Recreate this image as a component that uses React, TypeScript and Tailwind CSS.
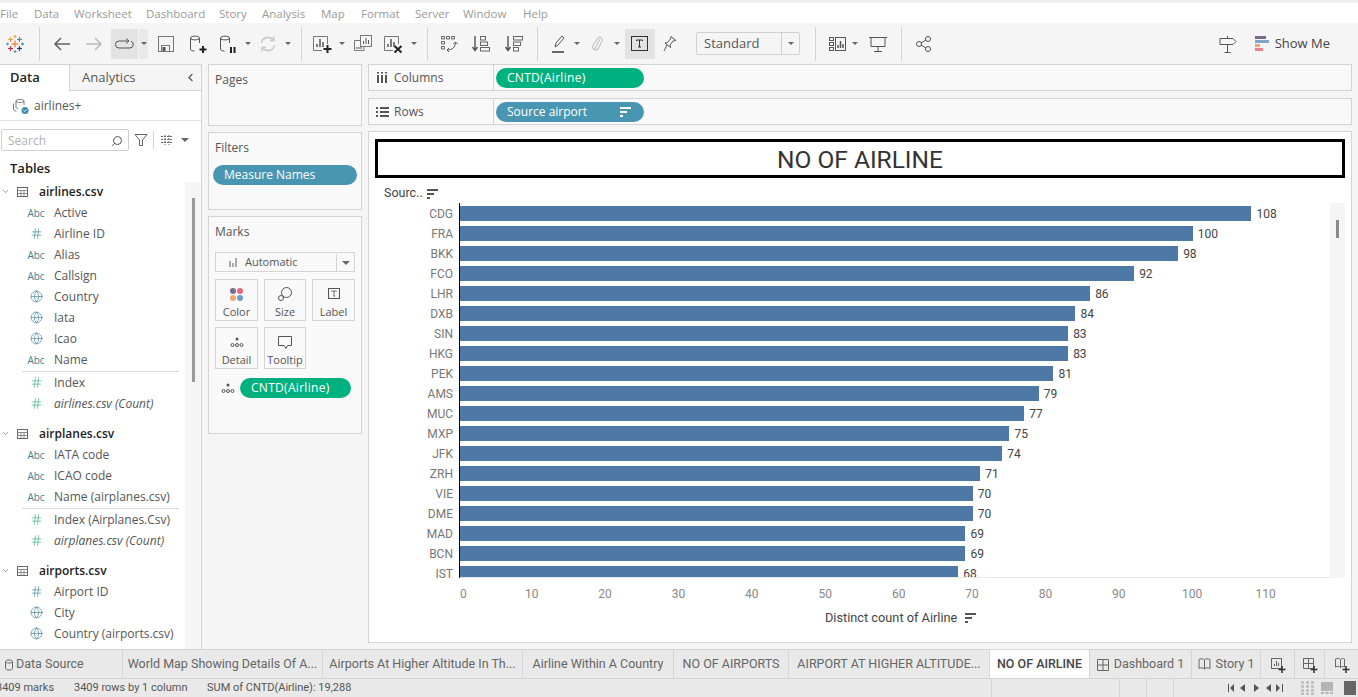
import React from "react";
import { ChevronDown, ChevronLeft, Globe, Hash, Search } from "lucide-react";

const menus = [
  { label: "File", cls: "w-[34px]" },
  { label: "Data", cls: "w-[40px]" },
  { label: "Worksheet", cls: "w-[72px]" },
  { label: "Dashboard", cls: "w-[73px]" },
  { label: "Story", cls: "w-[43px]" },
  { label: "Analysis", cls: "w-[59px]" },
  { label: "Map", cls: "w-[40px]" },
  { label: "Format", cls: "w-[54px]" },
  { label: "Server", cls: "w-[48px]" },
  { label: "Window", cls: "w-[60px]" },
  { label: "Help", cls: "w-[40px]" },
];

type Field = { name: string; kind: "abc" | "hash" | "globe" | "measure"; italic?: boolean; line?: boolean };

const tables: { name: string; cls: string; fields: Field[] }[] = [
  {
    name: "airlines.csv",
    cls: "",
    fields: [
      { name: "Active", kind: "abc" },
      { name: "Airline ID", kind: "hash" },
      { name: "Alias", kind: "abc" },
      { name: "Callsign", kind: "abc" },
      { name: "Country", kind: "globe" },
      { name: "Iata", kind: "globe" },
      { name: "Icao", kind: "globe" },
      { name: "Name", kind: "abc" },
      { name: "Index", kind: "measure", line: true },
      { name: "airlines.csv (Count)", kind: "measure", italic: true },
    ],
  },
  {
    name: "airplanes.csv",
    cls: "mt-[9px]",
    fields: [
      { name: "IATA code", kind: "abc" },
      { name: "ICAO code", kind: "abc" },
      { name: "Name (airplanes.csv)", kind: "abc" },
      { name: "Index (Airplanes.Csv)", kind: "measure", line: true },
      { name: "airplanes.csv (Count)", kind: "measure", italic: true },
    ],
  },
  {
    name: "airports.csv",
    cls: "mt-[9px]",
    fields: [
      { name: "Airport ID", kind: "hash" },
      { name: "City", kind: "globe" },
      { name: "Country (airports.csv)", kind: "globe" },
    ],
  },
];

const bars = [
  ["CDG", 108],
  ["FRA", 100],
  ["BKK", 98],
  ["FCO", 92],
  ["LHR", 86],
  ["DXB", 84],
  ["SIN", 83],
  ["HKG", 83],
  ["PEK", 81],
  ["AMS", 79],
  ["MUC", 77],
  ["MXP", 75],
  ["JFK", 74],
  ["ZRH", 71],
  ["VIE", 70],
  ["DME", 70],
  ["MAD", 69],
  ["BCN", 69],
  ["IST", 68],
] as const;

const ticks = [10, 20, 30, 40, 50, 60, 70, 80, 90, 100, 110];

const tabs = [
  { label: "World Map Showing Details Of A...", cls: "w-[200px]" },
  { label: "Airports At Higher Altitude In Th...", cls: "w-[200px]" },
  { label: "Airline Within A Country", cls: "w-[151px]" },
  { label: "NO OF AIRPORTS", cls: "w-[115px]" },
  { label: "AIRPORT AT HIGHER ALTITUDE...", cls: "w-[201px]" },
];

function Svg({ w = 22, h = 22, children }: { w?: number; h?: number; children: React.ReactNode }) {
  return (
    <svg width={w} height={h} viewBox={`0 0 ${w} ${h}`} fill="none" stroke="#555" strokeWidth="1">
      {children}
    </svg>
  );
}

function Caret() {
  return <div className="w-0 h-0 border-l-[3px] border-r-[3px] border-t-[3px] border-l-transparent border-r-transparent border-t-[#666]" />;
}

function Sep({ cls }: { cls: string }) {
  return <div className={`w-px h-[34px] bg-[#d4d4d4] shrink-0 ${cls}`} />;
}

function Slot({ cls, children }: { cls: string; children?: React.ReactNode }) {
  return <div className={`h-[30px] flex items-center justify-center shrink-0 ${cls}`}>{children}</div>;
}

function SortBars({ color = "#555" }: { color?: string }) {
  return (
    <svg width="12" height="10" viewBox="0 0 12 10">
      <rect x="0" y="0" width="11" height="2" fill={color} />
      <rect x="0" y="4" width="7" height="2" fill={color} />
      <rect x="0" y="8" width="3" height="2" fill={color} />
    </svg>
  );
}

function Logo() {
  const plus = (x: number, y: number, r: number, c: string) => (
    <g stroke={c} strokeWidth="1.2" key={`${x}-${y}`}>
      <line x1={x - r} y1={y} x2={x + r} y2={y} />
      <line x1={x} y1={y - r} x2={x} y2={y + r} />
    </g>
  );
  return (
    <svg width="18" height="18" viewBox="0 0 18 18">
      {plus(4.5, 4.5, 2.5, "#e8a05c")}
      {plus(13.5, 4.5, 2.5, "#4f8a9e")}
      {plus(4.5, 13.5, 2.5, "#b5324c")}
      {plus(13.5, 13.5, 2.5, "#1f447e")}
      {plus(9, 9, 3.5, "#e8842c")}
      {plus(9, 1.5, 1.5, "#e8a05c")}
      {plus(9, 16.5, 1.5, "#7d8fa6")}
      {plus(1.5, 9, 1.5, "#6f9db0")}
      {plus(16.5, 9, 1.5, "#4f8a9e")}
    </svg>
  );
}

function Cylinder({ children }: { children?: React.ReactNode }) {
  return (
    <Svg w={20} h={22}>
      <path d="M2.500 5c0-2.500 9-2.500 9 0v5M2.500 5c0 2.500 9 2.500 9 0M2.500 5v11c0 1.500 2 2 4 2" />
      {children}
    </Svg>
  );
}

function SheetIcon({ children }: { children?: React.ReactNode }) {
  return (
    <Svg w={20} h={22}>
      <path d="M10 17.500H1.500v-14h14V11" stroke="#777" />
      <path d="M5 14v-3M8 14V6M11 14v-5" strokeWidth="1.500" />
      {children}
    </Svg>
  );
}

function Toolbar() {
  return (
    <div className="h-[41px] bg-[#f5f5f5] flex items-center shrink-0">
      <Slot cls="w-[30px]"><Logo /></Slot>
      <Sep cls="ml-[9px]" />
      <Slot cls="w-[32px] ml-[6px]">
        <svg width="18" height="14" viewBox="0 0 18 14" fill="none" stroke="#666" strokeWidth="1.600"><path d="M17 7H2M8 1L2 7l6 6" /></svg>
      </Slot>
      <Slot cls="w-[32px]">
        <svg width="18" height="14" viewBox="0 0 18 14" fill="none" stroke="#bbb" strokeWidth="1.600"><path d="M1 7h15M10 1l6 6-6 6" /></svg>
      </Slot>
      <Slot cls="w-[27px] ml-px bg-[#e3e3e3]">
        <svg width="20" height="12" viewBox="0 0 20 12" fill="none" stroke="#555"><path d="M14 3H4a3.500 3.500 0 000 7h11a3.500 3.500 0 001-6.800" /><path d="M11 .5L14 3l-3 2.500" /></svg>
      </Slot>
      <Slot cls="w-[9px] ml-px bg-[#e9e9e9]"><Caret /></Slot>
      <Slot cls="w-[32px] ml-[2px]">
        <Svg w={18} h={18}><rect x="1.500" y="1.500" width="15" height="15" stroke="#777" /><rect x="4.500" y="10.500" width="8" height="6" stroke="#777" /><rect x="5.500" y="12" width="3" height="4" fill="#555" stroke="none" /></Svg>
      </Slot>
      <Slot cls="w-[32px]"><Cylinder><path d="M15 13v7M11.500 16.500h7" stroke="#222" strokeWidth="2" /></Cylinder></Slot>
      <Slot cls="w-[28px]"><Cylinder><path d="M13 14v6M16.500 14v6" stroke="#222" strokeWidth="2" /></Cylinder></Slot>
      <Slot cls="w-[12px]"><Caret /></Slot>
      <Slot cls="w-[28px]">
        <svg width="18" height="18" viewBox="0 0 18 18" fill="none" stroke="#c4c4c4" strokeWidth="1.300"><path d="M2.500 8a6.500 6.500 0 0112-2.500M15.500 10a6.500 6.500 0 01-12 2.500" /><path d="M15 1.500v4h-4M3 16.500v-4h4" /></svg>
      </Slot>
      <Slot cls="w-[12px]"><Caret /></Slot>
      <Sep cls="ml-[7px]" />
      <Slot cls="w-[28px] ml-[6px]"><SheetIcon><path d="M15.500 12v8M11.500 16h8" stroke="#222" strokeWidth="2" /></SheetIcon></Slot>
      <Slot cls="w-[12px]"><Caret /></Slot>
      <Slot cls="w-[30px]">
        <Svg w={20} h={20}><rect x="7.500" y="1.500" width="11" height="11" fill="#f5f5f5" stroke="#777" /><path d="M10.500 10V7M13 10V4M15.500 10V6" /><path d="M7 6.500H1.500v10H11V13" stroke="#777" /><path d="M4 15v-2M6 15v-2M8 15v-2" /></Svg>
      </Slot>
      <Slot cls="w-[30px]"><SheetIcon><path d="M11.500 13l7 6.500M18.500 13l-7 6.500" stroke="#222" strokeWidth="2" /></SheetIcon></Slot>
      <Slot cls="w-[12px]"><Caret /></Slot>
      <Sep cls="ml-[7px]" />
      <Slot cls="w-[30px] ml-[6px]">
        <Svg w={20} h={20}><path d="M2.500 2.500h3v2.500h-3zM7.500 2.500h3v2.500h-3zM12.500 2.500h3v2.500h-3zM2.500 7.500h3v2.500h-3zM2.500 12.500h3v2.500h-3z" stroke="#666" /><path d="M16.500 8c0 5-3 8-8 8M14.500 10l2-2 2 2M10 14l-2 2 2 2" /></Svg>
      </Slot>
      <Slot cls="w-[34px]">
        <Svg w={20} h={20}><path d="M4 2v14M1.500 13L4 16.500 6.500 13" strokeWidth="1.400" /><rect x="9.500" y="2.500" width="5" height="3.500" stroke="#666" /><rect x="9.500" y="8" width="7" height="3.500" stroke="#666" /><rect x="9.500" y="13.500" width="9" height="3.500" stroke="#666" /></Svg>
      </Slot>
      <Slot cls="w-[32px]">
        <Svg w={20} h={20}><path d="M4 2v14M1.500 13L4 16.500 6.500 13" strokeWidth="1.400" /><rect x="9.500" y="2.500" width="9" height="3.500" stroke="#666" /><rect x="9.500" y="8" width="7" height="3.500" stroke="#666" /><rect x="9.500" y="13.500" width="5" height="3.500" stroke="#666" /></Svg>
      </Slot>
      <Sep cls="ml-[7px]" />
      <Slot cls="w-[30px] ml-[6px]">
        <Svg w={18} h={20}><path d="M5 13l1-4 6-7 2 2-6 7z" /><path d="M2 18h12" stroke="#444" strokeWidth="1.600" /></Svg>
      </Slot>
      <Slot cls="w-[6px]"><Caret /></Slot>
      <Slot cls="w-[34px]">
        <svg width="16" height="20" viewBox="0 0 16 20" fill="none" stroke="#c4c4c4" strokeWidth="1.200"><path d="M11 5l-5 9c-1 2 2 3 3 1l4-8c1-3-2-5-4-3L4 11c-2 4 3 7 5 3" /></svg>
      </Slot>
      <Slot cls="w-[6px]"><Caret /></Slot>
      <Slot cls="w-[30px] ml-[5px] bg-[#e3e3e3]">
        <svg width="18" height="16" viewBox="0 0 18 16" fill="none" stroke="#333"><rect x=".5" y=".5" width="16" height="14" /><path d="M5.500 5V4h6v1M8.500 4v7M7 11h3" /></svg>
      </Slot>
      <Slot cls="w-[30px]">
        <Svg w={16} h={18}><path d="M9 1.500l5 4-3 .500-3 4 .500 2.500L3 8l2.500-.500 3-3.500zM5 10l-3 6" /></Svg>
      </Slot>
      <div className="w-[104px] h-[23px] ml-[11px] border border-[#d0d0d0] rounded-[2px] flex items-center text-[13px] text-[#555] shrink-0">
        <div className="flex-1 pl-[7px]">Standard</div>
        <div className="w-[18px] h-full border-l border-[#d0d0d0] flex items-center justify-center"><Caret /></div>
      </div>
      <Sep cls="ml-[15px]" />
      <Slot cls="w-[30px] ml-[6px]">
        <Svg w={20} h={18}><rect x="2.500" y="2.500" width="4" height="3" /><rect x="2.500" y="7.500" width="4" height="3" /><rect x="2.500" y="12.500" width="4" height="3" /><rect x="8.500" y="2.500" width="10" height="13" /><path d="M11 13v-3M13.500 13V6M16 13V9" strokeWidth="1.500" /></Svg>
      </Slot>
      <Slot cls="w-[6px]"><Caret /></Slot>
      <Slot cls="w-[30px] ml-[5px]">
        <Svg w={20} h={18}><path d="M1 2.500h18M3 2.500v9h14v-9M10 11.500v5M6 16.500h8" /></Svg>
      </Slot>
      <Sep cls="ml-[8px]" />
      <Slot cls="w-[30px] ml-[7px]">
        <Svg w={18} h={18}><circle cx="4" cy="9" r="2.500" /><circle cx="13" cy="4" r="2.500" /><circle cx="13" cy="14" r="2.500" /><path d="M6 8l5-3M6 10l5 3" /></Svg>
      </Slot>
      <div className="flex-1" />
      <Svg w={20} h={20}><path d="M2 4.500h13l3 3-3 3H2zM9.500 10.500v8M6.500 18.500h6M9.500 2v2" /></Svg>
      <div className="ml-[17px] flex items-center">
        <svg width="15" height="16" viewBox="0 0 15 16">
          <rect x="0" y="0" width="11" height="3" fill="#7b6a90" />
          <rect x="0" y="4" width="14" height="3" fill="#84a5c7" />
          <rect x="0" y="8" width="5" height="3" fill="#eda477" />
          <rect x="0" y="12" width="8" height="3" fill="#ec7f8c" />
        </svg>
        <span className="ml-[5px] text-[13px] text-[#444]">Show Me</span>
      </div>
      <div className="w-[28px]" />
    </div>
  );
}

function FieldIcon({ kind }: { kind: Field["kind"] }) {
  if (kind === "abc") return <span className="text-[10px] font-medium text-[#3f7c97] leading-none">Abc</span>;
  if (kind === "globe") return <Globe size={13} color="#3f7f9c" strokeWidth={1.2} />;
  return <Hash size={13} color={kind === "hash" ? "#3f8096" : "#3aa884"} strokeWidth={1.2} />;
}

function DataPane() {
  return (
    <div className="w-[202px] shrink-0 border-r border-t border-[#d4d4d4] bg-white flex flex-col overflow-hidden">
      <div className="h-[26px] flex shrink-0 text-[13px]">
        <div className="w-[70px] pl-[10px] flex items-center font-semibold text-[#222] border-r border-[#d4d4d4]">Data</div>
        <div className="flex-1 bg-[#f5f5f5] border-b border-[#d4d4d4] pl-[12px] flex items-center text-[#555] justify-between pr-[4px]">
          Analytics
          <ChevronLeft size={13} color="#555" />
        </div>
      </div>
      <div className="h-[30px] flex items-center border-b border-[#e2e2e2] pl-[12px] shrink-0">
        <svg width="18" height="18" viewBox="0 0 18 18" fill="none" stroke="#666" strokeWidth=".9">
          <path d="M4 4c0-2 8-2 8 0v4M4 4c0 2 8 2 8 0M4 4v6c0 1 1 1.500 2 1.700" />
          <path d="M1.500 6.500V12c0 1 1 2 3 2" />
          <circle cx="13" cy="13.500" r="3.500" fill="#3f8cb3" stroke="none" />
          <path d="M11.500 13.500l1 1 2-2" stroke="#fff" />
        </svg>
        <span className="ml-[4px] text-[12px] text-[#555]">airlines+</span>
      </div>
      <div className="h-[22px] mt-[8px] flex items-center shrink-0">
        <div className="w-[128px] h-full ml-px border border-[#cfcfcf] rounded-[2px] flex items-center justify-between pl-[6px] pr-[5px] pt-px text-[12px] text-[#b0b0b0]">
          Search
          <Search size={12} color="#555" className="-scale-x-100" />
        </div>
        <svg className="ml-[5px]" width="14" height="14" viewBox="0 0 14 14" fill="none" stroke="#666"><path d="M1 1.500h12L8.500 7v5.500h-3V7z" /></svg>
        <div className="w-px h-[18px] bg-[#d4d4d4] ml-[5px]" />
        <svg className="ml-[7px]" width="12" height="10" viewBox="0 0 12 10" stroke="#666"><path d="M0 1.500h12M0 4.500h12M0 7.500h12M4 0v10M8 0v10" strokeDasharray="2 1" /></svg>
        <div className="ml-[8px] w-0 h-0 border-l-[4px] border-r-[4px] border-t-[4px] border-l-transparent border-r-transparent border-t-[#666]" />
      </div>
      <div className="h-[20px] mt-[8px] -mb-px pl-[10px] flex items-center text-[13px] font-semibold text-[#222] shrink-0">Tables</div>
      <div className="relative flex-1 min-h-0">
        <div className="absolute right-0 top-[4px] bottom-0 w-[16px] bg-[#f5f5f5]">
          <div className="absolute left-[7px] top-[16px] w-[3px] h-[184px] bg-[#9a9a9a]" />
        </div>
        <div className="pt-[3px]">
          {tables.map((t) => (
            <div key={t.name} className={t.cls}>
              <div className="h-[21px] flex items-center">
                <ChevronDown size={9} color="#777" className="ml-px" />
                <svg className="ml-[7px]" width="12" height="10" viewBox="0 0 12 10" fill="none" stroke="#666"><rect x=".5" y=".5" width="10" height="9" /><path d="M.5 3.500h10M.5 6.500h10M4 3.500v6M7 3.500v6" strokeWidth=".7" /></svg>
                <span className="ml-[10px] text-[12px] font-semibold text-[#222]">{t.name}</span>
              </div>
              {t.fields.map((f) => (
                <React.Fragment key={f.name}>
                  {f.line && <div className="ml-[22px] w-[157px] h-px bg-[#dcdcdc] mt-px" />}
                  <div className="h-[21px] flex items-center whitespace-nowrap">
                    <div className="w-[24px] ml-[24px] flex justify-center"><FieldIcon kind={f.kind} /></div>
                    <span className={`ml-[6px] text-[12px] text-[#555] ${f.italic ? "italic" : ""}`}>{f.name}</span>
                  </div>
                </React.Fragment>
              ))}
            </div>
          ))}
        </div>
      </div>
    </div>
  );
}

function Card({ label, children }: { label: string; children: React.ReactNode }) {
  return (
    <div className="h-[42px] border border-[#d4d4d4] flex flex-col items-center justify-between pt-[5px] text-[11px] text-[#555]">
      <div className="h-[18px] flex items-center">{children}</div>
      {label}
    </div>
  );
}

function ShelvesColumn() {
  return (
    <div className="w-[154px] ml-[6px] shrink-0 flex flex-col">
      <div className="h-[62px] border border-[#d4d4d4] bg-[#f9f9f9] pl-[6px] pt-[6px] text-[12px] text-[#555]">Pages</div>
      <div className="h-[78px] mt-[6px] border border-[#d4d4d4] bg-[#f9f9f9] text-[12px] text-[#555]">
        <div className="pl-[6px] pt-[6px] h-[32px]">Filters</div>
        <div className="ml-[4px] w-[144px] h-[20px] rounded-full bg-[#4996b2] text-white flex items-center pl-[11px] whitespace-nowrap">Measure Names</div>
      </div>
      <div className="h-[218px] mt-[6px] border border-[#d4d4d4] bg-[#f9f9f9] text-[12px] text-[#555]">
        <div className="pl-[6px] pt-[6px] h-[35px]">Marks</div>
        <div className="ml-[6px] w-[140px] h-[20px] pt-px border border-[#d4d4d4] flex items-center text-[11px] mb-[7px]">
          <svg className="ml-[12px]" width="10" height="9" viewBox="0 0 10 9"><path d="M1 3h2v6H1zM4 5h2v4H4zM7 0h2v9H7z" fill="#aaa" /></svg>
          <span className="ml-[7px] flex-1">Automatic</span>
          <div className="w-[18px] h-full border-l border-[#d4d4d4] flex items-center justify-center">
            <div className="w-0 h-0 border-l-[4px] border-r-[4px] border-t-[4px] border-l-transparent border-r-transparent border-t-[#666]" />
          </div>
        </div>
        <div className="ml-[6px] w-[140px] grid grid-cols-[43px_42px_43px] gap-x-[6px] gap-y-[6px]">
          <Card label="Color">
            <svg width="15" height="15" viewBox="0 0 15 15">
              <circle cx="4" cy="4" r="3" fill="#7b6a90" />
              <circle cx="11" cy="4" r="3" fill="#e8667a" />
              <circle cx="4" cy="11" r="3" fill="#eda477" />
              <circle cx="11" cy="11" r="3" fill="#6c9ccb" />
            </svg>
          </Card>
          <Card label="Size">
            <Svg w={16} h={16}><circle cx="9.500" cy="6.500" r="5" /><circle cx="4" cy="12" r="2.500" fill="#f9f9f9" /></Svg>
          </Card>
          <Card label="Label">
            <Svg w={14} h={14}><rect x="1.500" y="1.500" width="11" height="10" /><path d="M4.500 4.500v-.5h5v.5M7 4v5M6 9h2" strokeWidth=".8" /></Svg>
          </Card>
          <Card label="Detail">
            <Svg w={14} h={14}><circle cx="7" cy="4" r="1.500" fill="#555" stroke="none" /><circle cx="2.500" cy="10" r="1.500" /><circle cx="7" cy="10" r="1.500" /><circle cx="11.500" cy="10" r="1.500" /></Svg>
          </Card>
          <Card label="Tooltip">
            <Svg w={16} h={15}><path d="M1.500 1.500h13v9h-4l-1.500 3-2-3h-5.500z" /></Svg>
          </Card>
        </div>
        <div className="mt-[9px] flex items-center">
          <div className="ml-[12px] w-[17px]">
            <Svg w={14} h={14}><circle cx="7" cy="4" r="1.500" fill="#555" stroke="none" /><circle cx="2.500" cy="10" r="1.500" /><circle cx="7" cy="10" r="1.500" /><circle cx="11.500" cy="10" r="1.500" /></Svg>
          </div>
          <div className="ml-[2px] w-[111px] h-[20px] rounded-full bg-[#00b180] text-white flex items-center pl-[11px] tracking-[0.3px]">CNTD(Airline)</div>
        </div>
      </div>
    </div>
  );
}

function Shelf({ label, icon, pill, sort, cls }: { label: string; icon: React.ReactNode; pill: string; sort?: boolean; cls: string }) {
  return (
    <div className={`h-[27px] border border-[#d4d4d4] bg-[#f9f9f9] flex items-center text-[12px] text-[#555] shrink-0 ${cls}`}>
      <div className="w-[125px] h-full border-r border-[#d4d4d4] flex items-center pl-[6px]">
        <div className="w-[14px] flex justify-center">{icon}</div>
        <span className="ml-[5px]">{label}</span>
      </div>
      <div className={`ml-[2px] w-[148px] h-[20px] rounded-full text-white flex items-center justify-between pl-[11px] pr-[12px] ${sort ? "bg-[#4996b2]" : "bg-[#00b180] tracking-[0.3px]"}`}>
        {pill}
        {sort && <SortBars color="#fff" />}
      </div>
    </div>
  );
}

function Chart() {
  return (
    <div className="h-[512px] mt-[6px] border border-[#d4d4d4] bg-white px-[6px] pt-[7px] flex flex-col shrink-0 overflow-hidden font-['Roboto',sans-serif]">
      <div className="h-[39px] pt-[3px] border-[3px] border-black flex items-center justify-center text-[24.5px] text-[#333] shrink-0">NO OF AIRLINE</div>
      <div className="h-[25px] pl-[9px] pt-[6px] flex items-center text-[12.5px] text-[#444] shrink-0">
        Sourc..
        <span className="ml-[4px]"><SortBars /></span>
      </div>
      <div className="flex h-[375px] shrink-0">
        <div className="relative w-[955px] overflow-hidden">
          {bars.map(([code, value]) => (
            <div key={code} className="h-[20px] flex items-center">
              <div className="w-[84px] pr-[6px] pt-px text-right text-[12px] leading-none text-[#777]">{code}</div>
              <div className="h-[20px] w-px bg-black" />
              <div className="h-[15px] mt-px bg-[#4e79a7]" style={{ width: value * 7.333 - 0.5 }} />
              <span className="ml-[5px] pt-px text-[12px] leading-none text-[#444]">{value}</span>
            </div>
          ))}
          <div className="absolute left-[85px] right-0 bottom-0 h-px bg-[#e8e8e8]" />
        </div>
        <div className="w-[15px] bg-[#f5f5f5] relative">
          <div className="absolute left-[6px] top-[17px] w-[3px] h-[18px] bg-[#8a8a8a]" />
        </div>
      </div>
      <div className="flex h-[31px] items-center text-[12px] text-[#888] shrink-0">
        <div className="w-[120px] pl-[85px]">0</div>
        {ticks.map((t) => (
          <div key={t} className="w-[73.4px] text-center">{t}</div>
        ))}
      </div>
      <div className="pl-[450px] flex items-center text-[12.75px] text-[#444] h-[17px]">
        Distinct count of Airline
        <span className="ml-[8px]"><SortBars /></span>
      </div>
    </div>
  );
}

function Tab({ cls, children, active }: { cls: string; children: React.ReactNode; active?: boolean }) {
  return (
    <div className={`h-full pt-px flex items-center border-r border-[#d4d4d4] whitespace-nowrap shrink-0 ${active ? "bg-white font-medium text-[#444]" : "text-[#666]"} ${cls}`}>
      {children}
    </div>
  );
}

export default function App() {
  return (
    <div className="w-[1358px] h-[697px] flex flex-col overflow-hidden bg-[#f5f5f5] font-['Open_Sans',sans-serif]">
      <div className="h-[3px] bg-[#f0f0f0] shrink-0" />
      <div className="h-[20px] pt-px bg-white flex items-center text-[11.5px] text-[#9a9a9a] shrink-0">
        {menus.map((m) => (
          <div key={m.label} className={m.cls}>{m.label}</div>
        ))}
      </div>
      <Toolbar />
      <div className="h-[585px] flex shrink-0">
        <DataPane />
        <ShelvesColumn />
        <div className="w-[984px] ml-[6px] shrink-0 flex flex-col">
          <Shelf
            label="Columns"
            pill="CNTD(Airline)"
            cls=""
            icon={<svg width="11" height="11" viewBox="0 0 11 11"><path d="M0 3h2v8H0zM4 3h2v8H4zM8 3h2v8H8zM0 0h2v1.500H0zM4 0h2v1.500H4zM8 0h2v1.500H8z" fill="#555" /></svg>}
          />
          <Shelf
            label="Rows"
            pill="Source airport"
            sort
            cls="mt-[7px]"
            icon={<svg width="13" height="10" viewBox="0 0 13 10"><path d="M0 0h2v2H0zM4 0h9v2H4zM0 4h2v2H0zM4 4h9v2H4zM0 8h2v2H0zM4 8h9v2H4z" fill="#555" /></svg>}
          />
          <Chart />
        </div>
      </div>
      <div className="h-[30px] border-t border-b border-[#d4d4d4] bg-[#e9e9e9] flex items-center text-[12.5px] shrink-0 font-['Roboto',sans-serif]">
        <Tab cls="w-[123px] pl-[5px]">
          <svg width="8" height="12" viewBox="0 0 8 12" fill="none" stroke="#666"><path d="M.5 2.500c0-2 7-2 7 0v7c0 2-7 2-7 0zM.5 2.500c0 2 7 2 7 0" /></svg>
          <span className="ml-[3px]">Data Source</span>
        </Tab>
        {tabs.map((t) => (
          <Tab key={t.label} cls={`justify-center ${t.cls}`}>{t.label}</Tab>
        ))}
        <Tab cls="w-[100px] justify-center" active>NO OF AIRLINE</Tab>
        <Tab cls="w-[102px] justify-center">
          <svg width="12" height="12" viewBox="0 0 12 12" fill="none" stroke="#666"><path d="M.5.500h11v11H.5zM6 .5v11M.5 6h11" /></svg>
          <span className="ml-[5px]">Dashboard 1</span>
        </Tab>
        <Tab cls="w-[69px] justify-center">
          <svg width="13" height="13" viewBox="0 0 13 13" fill="none" stroke="#666"><path d="M1 1.500c2-1 4-1 5.500.5 1.500-1.500 3.500-1.500 5.500-.5v9c-2-1-4-1-5.500.5C5 9.500 3 9.500 1 10.500zM6.500 2v9" /></svg>
          <span className="ml-[5px]">Story 1</span>
        </Tab>
        <Tab cls="w-[34px] justify-center">
          <svg width="16" height="16" viewBox="0 0 16 16" fill="none" stroke="#666"><rect x="1.500" y="1.500" width="10" height="10" /><path d="M4.500 9V7M6.500 9V4M8.500 9V6" /><path d="M12 9v7M8.500 12.500h7" stroke="#333" strokeWidth="1.500" /></svg>
        </Tab>
        <Tab cls="w-[30px] justify-center">
          <svg width="16" height="16" viewBox="0 0 16 16" fill="none" stroke="#666"><path d="M1.500 1.500h10v10h-10zM6.500 1.500v10M1.500 6.500h10" /><path d="M12 9v7M8.500 12.500h7" stroke="#333" strokeWidth="1.500" /></svg>
        </Tab>
        <Tab cls="w-[33px] border-r-0 justify-center">
          <svg width="16" height="16" viewBox="0 0 16 16" fill="none" stroke="#666"><path d="M1.500 2c2-1 3.500-1 5 .5 1-1 2.500-1.500 4-.5v8c-1.500-1-3-.5-4 .5-1.500-1.500-3-1.500-5-.5zM6.500 2.500v8" /><path d="M12 9v7M8.500 12.500h7" stroke="#333" strokeWidth="1.500" /></svg>
        </Tab>
      </div>
      <div className="flex-1 bg-[#e9e9e9] flex items-center text-[11px] text-[#555] whitespace-nowrap min-h-0 font-['Roboto',sans-serif]">
        <span className="-ml-[4px] w-[78px] shrink-0">3409 marks</span>
        <span className="w-[133px] shrink-0">3409 rows by 1 column</span>
        <span className="w-[784px] shrink-0">SUM of CNTD(Airline): 19,288</span>
        <div className="w-[128px] h-full border-l border-[#d4d4d4] shrink-0" />
        <div className="w-[27px] h-full border-l border-[#d4d4d4] shrink-0" />
        <div className="w-[27px] h-full border-l border-[#d4d4d4] shrink-0" />
        <div className="h-full border-l border-[#d4d4d4] flex items-center pl-[54px]">
          <svg width="60" height="8" viewBox="0 0 60 8" fill="#555"><path d="M1 0h1v8H1zM7 0v8L3 4zM18 0v8l-5-4zM27 0l5 4-5 4zM44 0l-5 4 5 4zM49 0l4 4-4 4zM55 0h1v8h-1z" transform="translate(-1 0)" /></svg>
        </div>
        <svg className="ml-[12px]" width="58" height="14" viewBox="0 0 58 14">
          <path d="M1 1.500h13M1 5.500h13M1 9.500h13M1 13h13" stroke="#bdbdbd" strokeWidth="2.500" strokeDasharray="3 2" />
          <path d="M21 1h12v9H21z" fill="#b5b5b5" />
          <path d="M21 12h12" stroke="#b5b5b5" strokeWidth="2" strokeDasharray="3 1.500" />
          <path d="M44 0h12v14H44z" fill="#666" />
        </svg>
      </div>
    </div>
  );
}
